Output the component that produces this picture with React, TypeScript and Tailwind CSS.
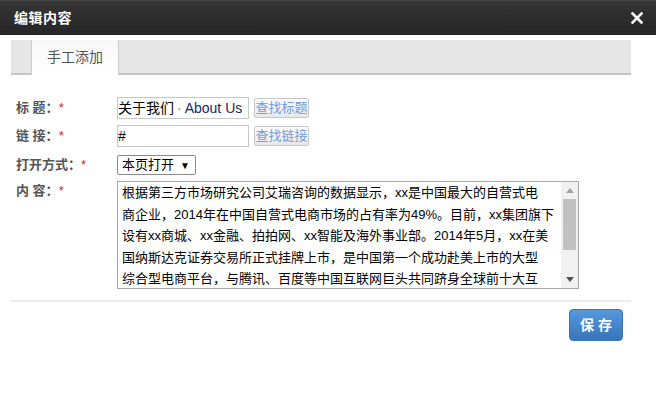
import React from 'react';

const FONT = { fontFamily: '"Liberation Sans", "Noto Sans CJK SC", sans-serif' };

const lines = [
  '根据第三方市场研究公司艾瑞咨询的数据显示，xx是中国最大的自营式电',
  '商企业，2014年在中国自营式电商市场的占有率为49%。目前，xx集团旗下',
  '设有xx商城、xx金融、拍拍网、xx智能及海外事业部。2014年5月，xx在美',
  '国纳斯达克证券交易所正式挂牌上市，是中国第一个成功赴美上市的大型',
  '综合型电商平台，与腾讯、百度等中国互联网巨头共同跻身全球前十大互',
];

const Label: React.FC<{ text: string; className?: string }> = ({ text, className = '' }) => (
  <div className={`w-[101px] shrink-0 text-[13px] font-bold text-[#555] whitespace-pre ${className}`}>
    {text}
    <span className="text-[#e02020] font-normal">*</span>
  </div>
);

const FindButton: React.FC<{ text: string }> = ({ text }) => (
  <button className="ml-[5px] h-[20px] w-[55px] rounded-[2px] border border-[#c8c8c8] bg-gradient-to-b from-[#fbfbfb] to-[#e8e8e8] text-[13px] leading-[18px] text-[#739ddb]">
    {text}
  </button>
);

export default function App() {
  return (
    <div className="w-[656px] h-[399px] bg-white overflow-hidden" style={FONT}>
      {/* Title bar */}
      <div className="h-[35px] bg-gradient-to-b from-[#353535] to-[#262626] border-t border-[#454545] flex items-center justify-between pl-[14px] pr-[13px]">
        <span className="text-white text-[14px] font-bold tracking-[0.5px]">编辑内容</span>
        <svg width="12" height="12" viewBox="0 0 12 12">
          <path d="M1.5 1.5 L10.5 10.5 M10.5 1.5 L1.5 10.5" stroke="#fff" strokeWidth="2.6" strokeLinecap="square" />
        </svg>
      </div>

      <div className="pl-[11px] pr-[25px] pt-[5px]">
        {/* Tabs */}
        <div className="h-[35px] bg-[#e6e6e6] border-b-2 border-[#c4c4c4] flex pl-[20px]">
          <div className="w-[88px] -mb-[2px] border-x border-[#cbcbcb] bg-gradient-to-b from-[#f7f7f7] to-white flex items-center justify-center text-[14px] text-[#555]">
            手工添加
          </div>
        </div>

        {/* Form */}
        <div className="pl-[5px] pt-[22px]">
          <div className="flex items-center">
            <Label text={'标 题：'} />
            <div className="w-[132px] h-[22px] border border-[#c9c9c9] flex items-center text-[14px] text-black whitespace-nowrap overflow-hidden">
              关于我们 <span className="text-[#888] mx-[3px]">·</span>
              <span className="text-[#1b2760]">About Us</span>
            </div>
            <FindButton text="查找标题" />
          </div>

          <div className="flex items-center mt-[6px]">
            <Label text={'链 接：'} />
            <div className="w-[132px] h-[22px] border border-[#c9c9c9] flex items-center text-[14px] text-black">#</div>
            <FindButton text="查找链接" />
          </div>

          <div className="flex items-center mt-[8px]">
            <Label text={'打开方式：'} />
            <div className="w-[79px] h-[20px] border border-[#8a8a8a] rounded-[2px] flex items-center pl-[4px] text-[13px] text-black">
              本页打开 <span className="ml-[6px] text-[10px]">▼</span>
            </div>
          </div>

          <div className="flex items-start mt-[6px]">
            <Label text={'内 容：'} className="leading-[20px]" />
            <div className="w-[462px] h-[108px] border border-[#a9a9a9] flex overflow-hidden">
              <div className="flex-1 pl-[4px] text-[13px] leading-[21.5px] text-black whitespace-nowrap overflow-hidden">
                {lines.map((l, i) => (
                  <div key={i}>{l}</div>
                ))}
              </div>
              <div className="w-[17px] bg-[#f1f1f1] flex flex-col items-center">
                <div className="h-[17px] flex items-center justify-center">
                  <svg width="8" height="5" viewBox="0 0 8 5"><path d="M0 5 L4 0 L8 5 Z" fill="#a3a3a3" /></svg>
                </div>
                <div className="w-[13px] h-[51px] bg-[#c1c1c1]" />
                <div className="flex-1" />
                <div className="h-[17px] flex items-center justify-center">
                  <svg width="8" height="5" viewBox="0 0 8 5"><path d="M0 0 L4 5 L8 0 Z" fill="#505050" /></svg>
                </div>
              </div>
            </div>
          </div>
        </div>

        {/* Footer */}
        <div className="mt-[11px] h-[2px] bg-[#ececec]" />
        <div className="flex justify-end mt-[7px] pr-[8px]">
          <button className="w-[54px] h-[32px] rounded-[4px] border border-[#3b73b5] bg-gradient-to-b from-[#5598dc] to-[#3774bd] text-white text-[14px] font-bold tracking-[4px] pl-[4px]">
            保存
          </button>
        </div>
      </div>
    </div>
  );
}
